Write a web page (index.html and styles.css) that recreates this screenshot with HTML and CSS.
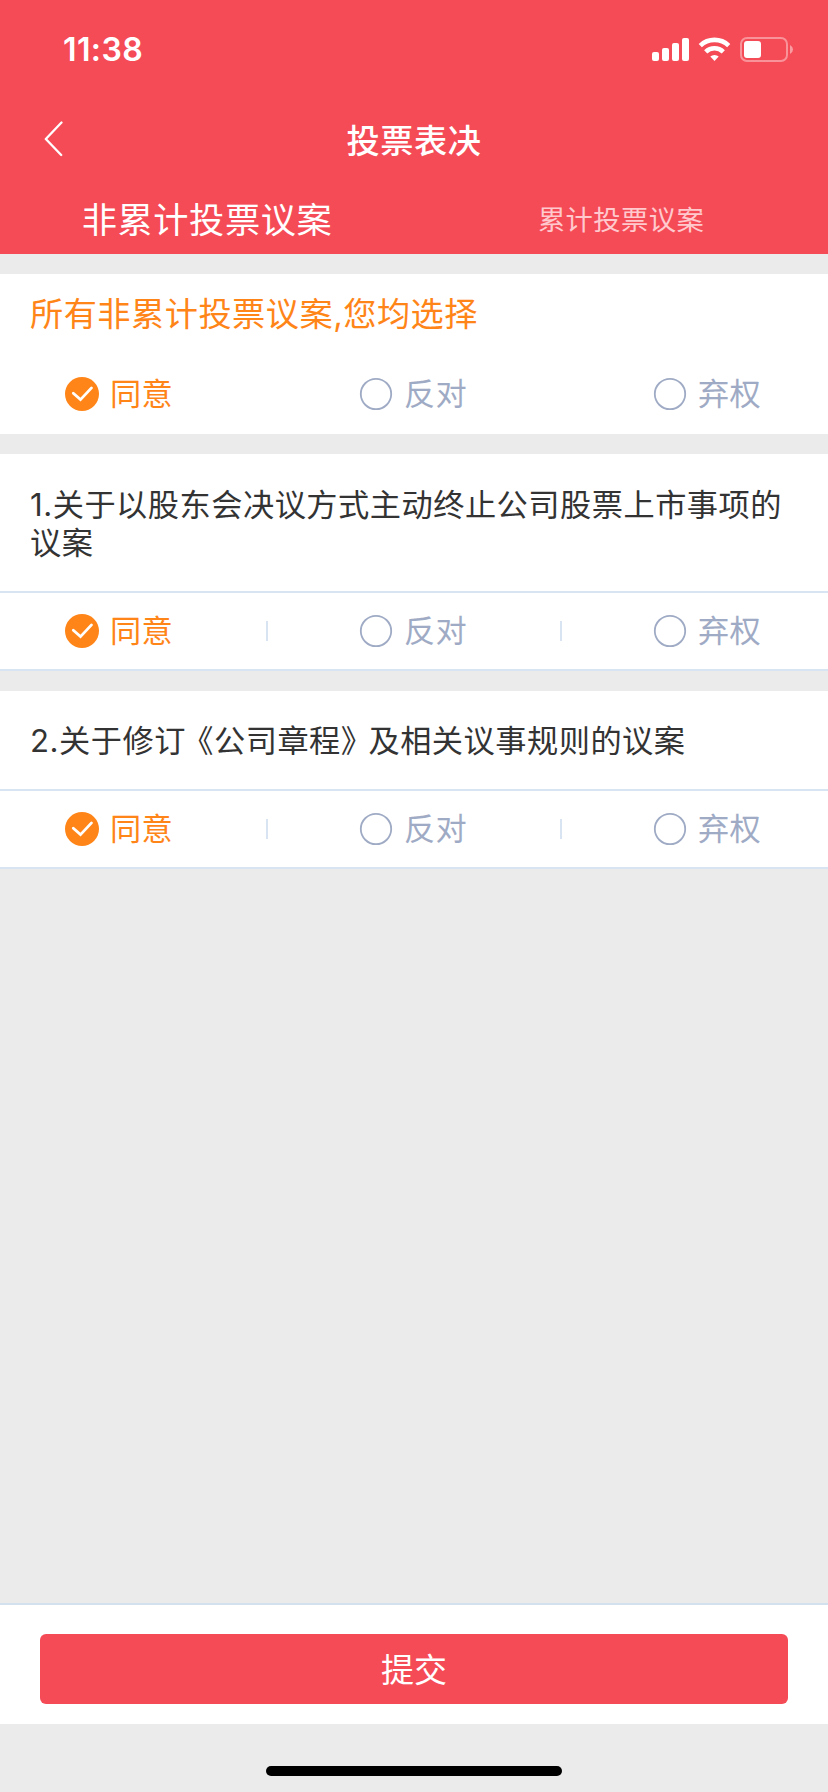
FILE: index.html
```html
<!DOCTYPE html>
<html lang="zh-CN">
<head>
<meta charset="utf-8">
<title>投票表决</title>
<link rel="stylesheet" href="styles.css">
</head>
<body>
<svg class="defs" width="0" height="0" aria-hidden="true">
  <symbol id="checked" viewBox="0 0 34 34">
    <circle cx="17" cy="17" r="17" fill="#ff8518"/>
    <path d="M8.3 16.2L15.5 22.6L26.5 10.9" fill="none" stroke="#fff" stroke-width="2.8" stroke-linecap="round"/>
  </symbol>
  <symbol id="unchecked" viewBox="0 0 34 34">
    <circle cx="17" cy="17" r="15.2" fill="none" stroke="#9fabc5" stroke-width="1.8"/>
  </symbol>
</svg>
<div class="app">
  <header class="header">
    <div class="status">
      <span class="time">11:38</span>
      <svg class="status-icons" width="142" height="26" viewBox="0 0 142 26">
        <g fill="#fff">
          <rect x="0" y="15" width="7" height="9" rx="2"/>
          <rect x="10" y="11" width="7" height="13" rx="2"/>
          <rect x="20" y="6" width="7" height="18" rx="2"/>
          <rect x="30" y="1" width="7" height="23" rx="2"/>
          <path d="M62.5 24L58.3 19.6A6 6 0 0 1 66.7 19.6Z"/>
        </g>
        <g fill="none" stroke="#fff" stroke-width="4.6">
          <path d="M48.3 8.6A20.6 20.6 0 0 1 76.7 8.6"/>
          <path d="M53.7 14.8A12.8 12.8 0 0 1 71.3 14.8"/>
        </g>
        <rect x="89" y="1" width="46" height="23" rx="6" fill="none" stroke="#fff" stroke-opacity=".4" stroke-width="2"/>
        <rect x="92" y="4" width="17" height="17" rx="3" fill="#fff"/>
        <path d="M138 8Q141 9.600 141 12.500Q141 15.400 138 17Z" fill="#fff" fill-opacity=".45"/>
      </svg>
    </div>
    <div class="navbar">
      <svg class="back" width="20" height="36" viewBox="0 0 20 36"><path d="M17.500 1.500L1.800 18L17.200 34" fill="none" stroke="#fff" stroke-width="2.300" stroke-linecap="round" stroke-linejoin="round"/></svg>
      <h1 class="title">投票表决</h1>
    </div>
    <nav class="tabs">
      <div class="tab active">非累计投票议案</div>
      <div class="tab">累计投票议案</div>
    </nav>
  </header>
  <main class="content">
    <section class="card all">
      <h2 class="all-title">所有非累计投票议案,您均选择</h2>
      <div class="options">
        <div class="option on"><svg class="radio"><use href="#checked"/></svg><span class="label">同意</span></div>
        <div class="option"><svg class="radio"><use href="#unchecked"/></svg><span class="label">反对</span></div>
        <div class="option"><svg class="radio"><use href="#unchecked"/></svg><span class="label">弃权</span></div>
      </div>
    </section>
    <section class="card item">
      <p class="question">1.关于以股东会决议方式主动终止公司股票上市事项的议案</p>
      <div class="options">
        <div class="option on"><svg class="radio"><use href="#checked"/></svg><span class="label">同意</span></div>
        <div class="option"><svg class="radio"><use href="#unchecked"/></svg><span class="label">反对</span></div>
        <div class="option"><svg class="radio"><use href="#unchecked"/></svg><span class="label">弃权</span></div>
      </div>
    </section>
    <section class="card item">
      <p class="question">2.关于修订<span class="open">《</span>公司章程<span class="close">》</span>及相关议事规则的议案</p>
      <div class="options">
        <div class="option on"><svg class="radio"><use href="#checked"/></svg><span class="label">同意</span></div>
        <div class="option"><svg class="radio"><use href="#unchecked"/></svg><span class="label">反对</span></div>
        <div class="option"><svg class="radio"><use href="#unchecked"/></svg><span class="label">弃权</span></div>
      </div>
    </section>
  </main>
  <footer class="footer"><button class="submit" type="button">提交</button></footer>
  <div class="home"><div class="home-bar"></div></div>
</div>
</body>
</html>
```

FILE: styles.css
```css
* { box-sizing: border-box; }
body {
  margin: 0;
  background: #ebebeb;
  font-family: Inter, "Noto Sans CJK SC", sans-serif;
  font-weight: 400;
}
h1, h2, p { margin: 0; font-weight: 400; }
.defs { position: absolute; }
.app { width: 828px; height: 1792px; display: flex; flex-direction: column; }

.header { height: 254px; background: #f54b57; color: #fff; }
.status {
  height: 88px;
  padding: 12px 34px 0 63px;
  display: flex;
  align-items: center;
  justify-content: space-between;
}
.time { font-size: 32px; font-weight: 600; line-height: 40px; letter-spacing: .4px; }
.navbar { height: 102px; display: grid; grid-template-columns: 100px 1fr 100px; align-items: center; }
.back { margin-left: 44px; }
.title {
  font-family: "Noto Sans CJK SC", sans-serif;
  font-size: 33.2px;
  font-weight: 500;
  line-height: 48px;
  letter-spacing: .6px;
  text-align: center;
}
.tabs { height: 56px; display: grid; grid-template-columns: 1fr 1fr; align-items: center; }
.tab {
  font-family: "Noto Sans CJK SC", sans-serif;
  font-size: 27.3px;
  line-height: 48px;
  letter-spacing: .4px;
  text-align: center;
  color: #ffc9cd;
}
.tab.active { font-size: 35.2px; letter-spacing: .6px; color: #fff; }

.content { flex: 1; padding-top: 20px; display: flex; flex-direction: column; gap: 20px; }
.card { background: #fff; }
.all { height: 160px; display: flex; flex-direction: column; }
.all-title {
  height: 80px;
  padding: 0 30px;
  font-size: 33.2px;
  line-height: 81px;
  letter-spacing: .5px;
  color: #ff8518;
}
.all .options { height: 80px; }
.question {
  padding: 31.5px 30px 29px;
  font-size: 31.2px;
  line-height: 38px;
  letter-spacing: .52px;
  color: #333;
}
/* Book title marks set tighter than a full em */
.open, .close { font-feature-settings: "halt"; }
.open { margin-left: 12px; }
.close { margin-right: 11.5px; }
.options { display: grid; grid-template-columns: 268px 294px 266px; align-items: center; }
.item .options { height: 80px; border-top: 2px solid #d8e4f2; border-bottom: 2px solid #d8e4f2; }
.option {
  height: 34px;
  padding-left: 91px;
  display: flex;
  align-items: center;
  gap: 11px;
  font-family: "Noto Sans CJK SC", sans-serif;
  font-size: 31.2px;
  line-height: 34px;
  letter-spacing: .3px;
  color: #9fabc5;
}
.option.on { padding-left: 65px; color: #ff8518; }
.radio { width: 34px; height: 34px; flex: none; }
.label { padding-bottom: 4px; }
.item .option:not(:last-child) {
  background: linear-gradient(#d8e4f2, #d8e4f2) right center / 2px 20px no-repeat;
}

.footer { height: 121px; padding: 29px 40px 20px; border-top: 2px solid #d3e1ef; background: #fff; }
.submit {
  display: block;
  width: 100%;
  height: 70px;
  border: 0;
  border-radius: 6px;
  background: #f54b57;
  color: #fff;
  font-family: "Noto Sans CJK SC", sans-serif;
  font-size: 33px;
  line-height: 66px;
  padding: 0 0 2px;
}
.home { height: 68px; padding-top: 42px; }
.home-bar { width: 296px; height: 10px; margin: 0 auto; border-radius: 5px; background: #000; }
```
